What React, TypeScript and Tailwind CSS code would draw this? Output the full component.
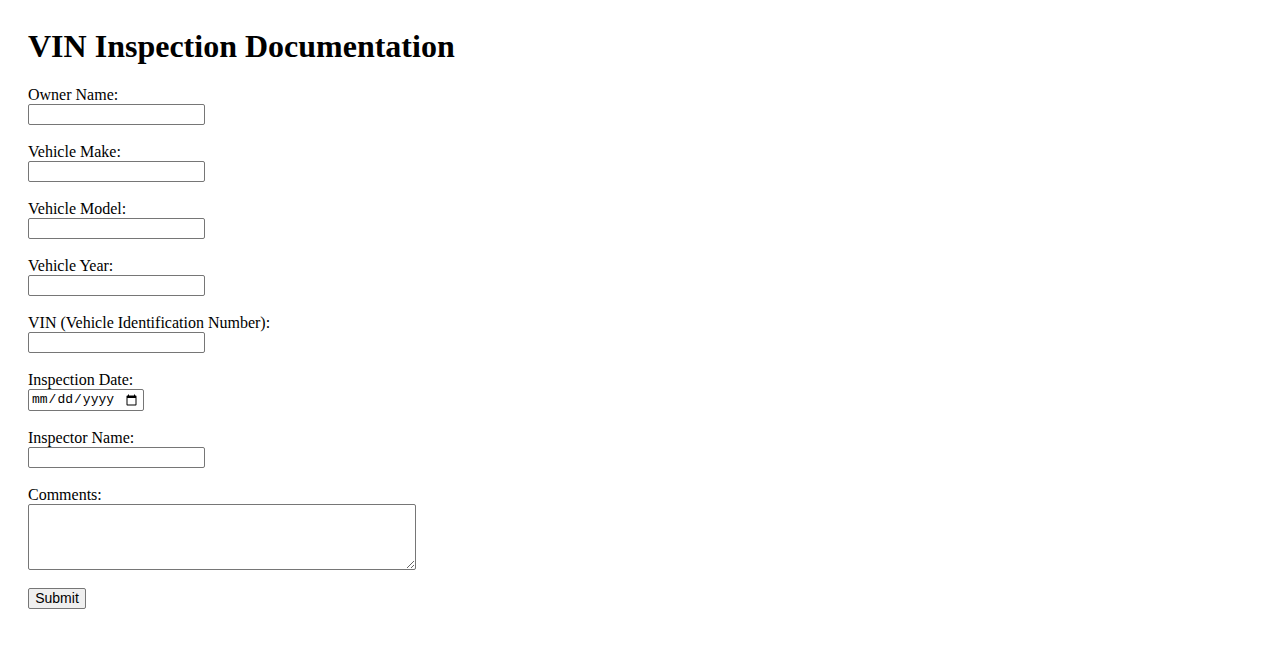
const fields = [
  { id: 'ownerName', label: 'Owner Name:' },
  { id: 'vehicleMake', label: 'Vehicle Make:' },
  { id: 'vehicleModel', label: 'Vehicle Model:' },
  { id: 'vehicleYear', label: 'Vehicle Year:' },
  { id: 'vin', label: 'VIN (Vehicle Identification Number):' },
];

const inputClass =
  'block w-[177px] h-[21px] px-[2px] border border-[#767676] rounded-[2px] bg-white text-[13.33px] font-["Liberation_Sans",Arial,sans-serif]';

export default function App() {
  return (
    <div className="min-h-screen bg-white text-black pl-[28px] pt-[28px] font-['Liberation_Serif','Times_New_Roman',serif]">
      <h1 className="text-[32px] leading-[37px] font-bold mb-[21px]">VIN Inspection Documentation</h1>

      <form onSubmit={(e) => e.preventDefault()} className="text-[16px]">
        {fields.map((f) => (
          <div key={f.id} className="mb-[18px]">
            <label htmlFor={f.id} className="block leading-[18px]">{f.label}</label>
            <input id={f.id} type="text" className={inputClass} />
          </div>
        ))}

        <div className="mb-[18px]">
          <label htmlFor="inspectionDate" className="block leading-[18px]">Inspection Date:</label>
          <input
            id="inspectionDate"
            type="date"
            className="block w-[116px] h-[22px] pl-[2px] pr-[3px] border border-[#767676] rounded-[2px] bg-white text-[13px] font-['Liberation_Mono',monospace]"
          />
        </div>

        <div className="mb-[18px]">
          <label htmlFor="inspectorName" className="block leading-[18px]">Inspector Name:</label>
          <input id="inspectorName" type="text" className={inputClass} />
        </div>

        <div className="mb-[18px]">
          <label htmlFor="comments" className="block leading-[18px]">Comments:</label>
          <textarea
            id="comments"
            className="block w-[388px] h-[66px] p-[2px] border border-[#767676] rounded-[2px] bg-white text-[13px] font-['Liberation_Mono',monospace]"
          />
        </div>

        <button
          type="submit"
          className="block w-[58px] h-[21px] border border-[#767676] rounded-[2px] bg-[#efefef] text-[14px] leading-[17px] font-['Liberation_Sans',Arial,sans-serif]"
        >
          Submit
        </button>
      </form>
    </div>
  );
}
